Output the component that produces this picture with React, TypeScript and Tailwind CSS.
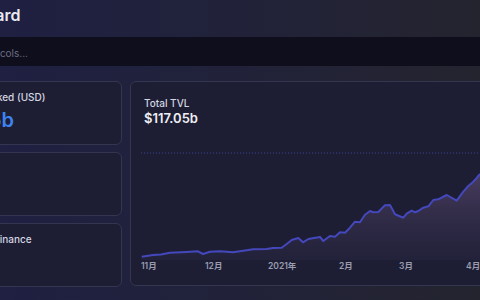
const points: [number, number][] = [
  [0.7, 106.7], [12, 105], [20, 104.5], [29, 102.7], [45.7, 102], [57, 101.3], [62, 104],
  [69, 101.7], [79, 101.3], [92, 102.3], [105.7, 100.3], [112, 99.3], [125.7, 99],
  [132, 98], [140.7, 97.7], [145.7, 94], [150.7, 90], [157.3, 88], [162, 92.3],
  [167.3, 89], [179, 87], [182.3, 91], [189, 86], [194, 86.7], [199, 82.3],
  [204, 82.7], [209, 77.7], [214, 71.7], [219, 72.3], [224, 64.7], [229, 61],
  [232.3, 62.3], [237.3, 62], [244, 55.3], [249, 55], [254, 64.3], [262.3, 67.7],
  [265.7, 63.7], [270.7, 60.7], [274, 62.3], [277.3, 61], [282.3, 57.7],
  [287.3, 56.3], [292.3, 50], [297.3, 49.3], [305.7, 45], [315.7, 50.7],
  [322.3, 41.7], [327.3, 36], [332.3, 31.7], [335.7, 28], [339, 24],
];

const labels = [
  { x: 0, text: "11月" },
  { x: 64, text: "12月" },
  { x: 127, text: "2021年" },
  { x: 198, text: "2月" },
  { x: 258, text: "3月" },
  { x: 325, text: "4月" },
];

function TvlChart() {
  const line = points.map(([x, y], i) => `${i === 0 ? "M" : "L"}${x},${y}`).join(" ");
  const area = `${line} L339,110 L0.7,110 Z`;
  return (
    <svg width="339" height="122" viewBox="0 0 339 122" className="block">
      <defs>
        <linearGradient id="tvlFill" x1="0" y1="0" x2="0" y2="1">
          <stop offset="0%" stopColor="#8a6a9c" stopOpacity="0.4" />
          <stop offset="100%" stopColor="#4a3d66" stopOpacity="0.12" />
        </linearGradient>
      </defs>
      <line x1="0" y1="3" x2="339" y2="3" stroke="#3d4096" strokeWidth="1" strokeDasharray="1 2" />
      <path d={area} fill="url(#tvlFill)" />
      <path d={line} fill="none" stroke="#4448bc" strokeWidth="2" strokeLinejoin="round" />
      {labels.map((l) => (
        <text key={l.text} x={l.x} y="119" fontSize="8.5" fontWeight="600" fill="#9a9cb0">
          {l.text}
        </text>
      ))}
    </svg>
  );
}

function StatCard({ label, value, labelMl }: { label: string; value?: string; labelMl: string }) {
  return (
    <div className="h-[64px] rounded-md border border-[#34354f] bg-[#1d1e34] pt-[8px]">
      <div className={`text-[10px] leading-[14px] font-medium text-[#d4d5e0] ${labelMl}`}>{label}</div>
      {value && (
        <div className="mt-[4px] ml-[68px] text-[20px] leading-6 font-semibold text-[#3d83f0]">{value}</div>
      )}
    </div>
  );
}

export default function App() {
  return (
    <div
      className="w-[480px] h-[300px] overflow-hidden bg-gradient-to-r from-[#1f2042] via-[#212239] to-[#24242f]"
      style={{ fontFamily: "Inter, 'Noto Sans CJK SC', sans-serif" }}
    >
      <div className="-ml-[138px] w-[760px]">
        <div className="h-[30px] flex items-center">
          <h1 className="ml-[74px] text-[16px] font-semibold text-[#e9e9f2]">Dashboard</h1>
        </div>
        <div className="mt-[7px] h-[29px] bg-[#0e0e1c] flex items-center pt-[3px]">
          <span className="ml-[77px] text-[10px] text-[#6c6d82]">Search protocols...</span>
        </div>
        <div className="mt-[15px] flex gap-[8px]">
          <div className="w-[260px] flex flex-col gap-[7px]">
            <StatCard label="Total Value Locked (USD)" value="$117.05b" labelMl="ml-[61px]" />
            <StatCard label="Change (24h)" labelMl="ml-[61px]" />
            <StatCard label="ETH Dominance" labelMl="ml-[92px]" />
          </div>
          <div className="w-[400px] h-[205px] rounded-md border border-[#34354f] bg-[#1d1e34] pt-[14px] px-[13px]">
            <div className="text-[10px] leading-[14px] font-medium text-[#d4d5e0]">Total TVL</div>
            <div className="text-[13px] leading-4 font-semibold text-[#eeeef5]">$117.05b</div>
            <div className="mt-[24px] -ml-[3px]">
              <TvlChart />
            </div>
          </div>
        </div>
      </div>
    </div>
  );
}
